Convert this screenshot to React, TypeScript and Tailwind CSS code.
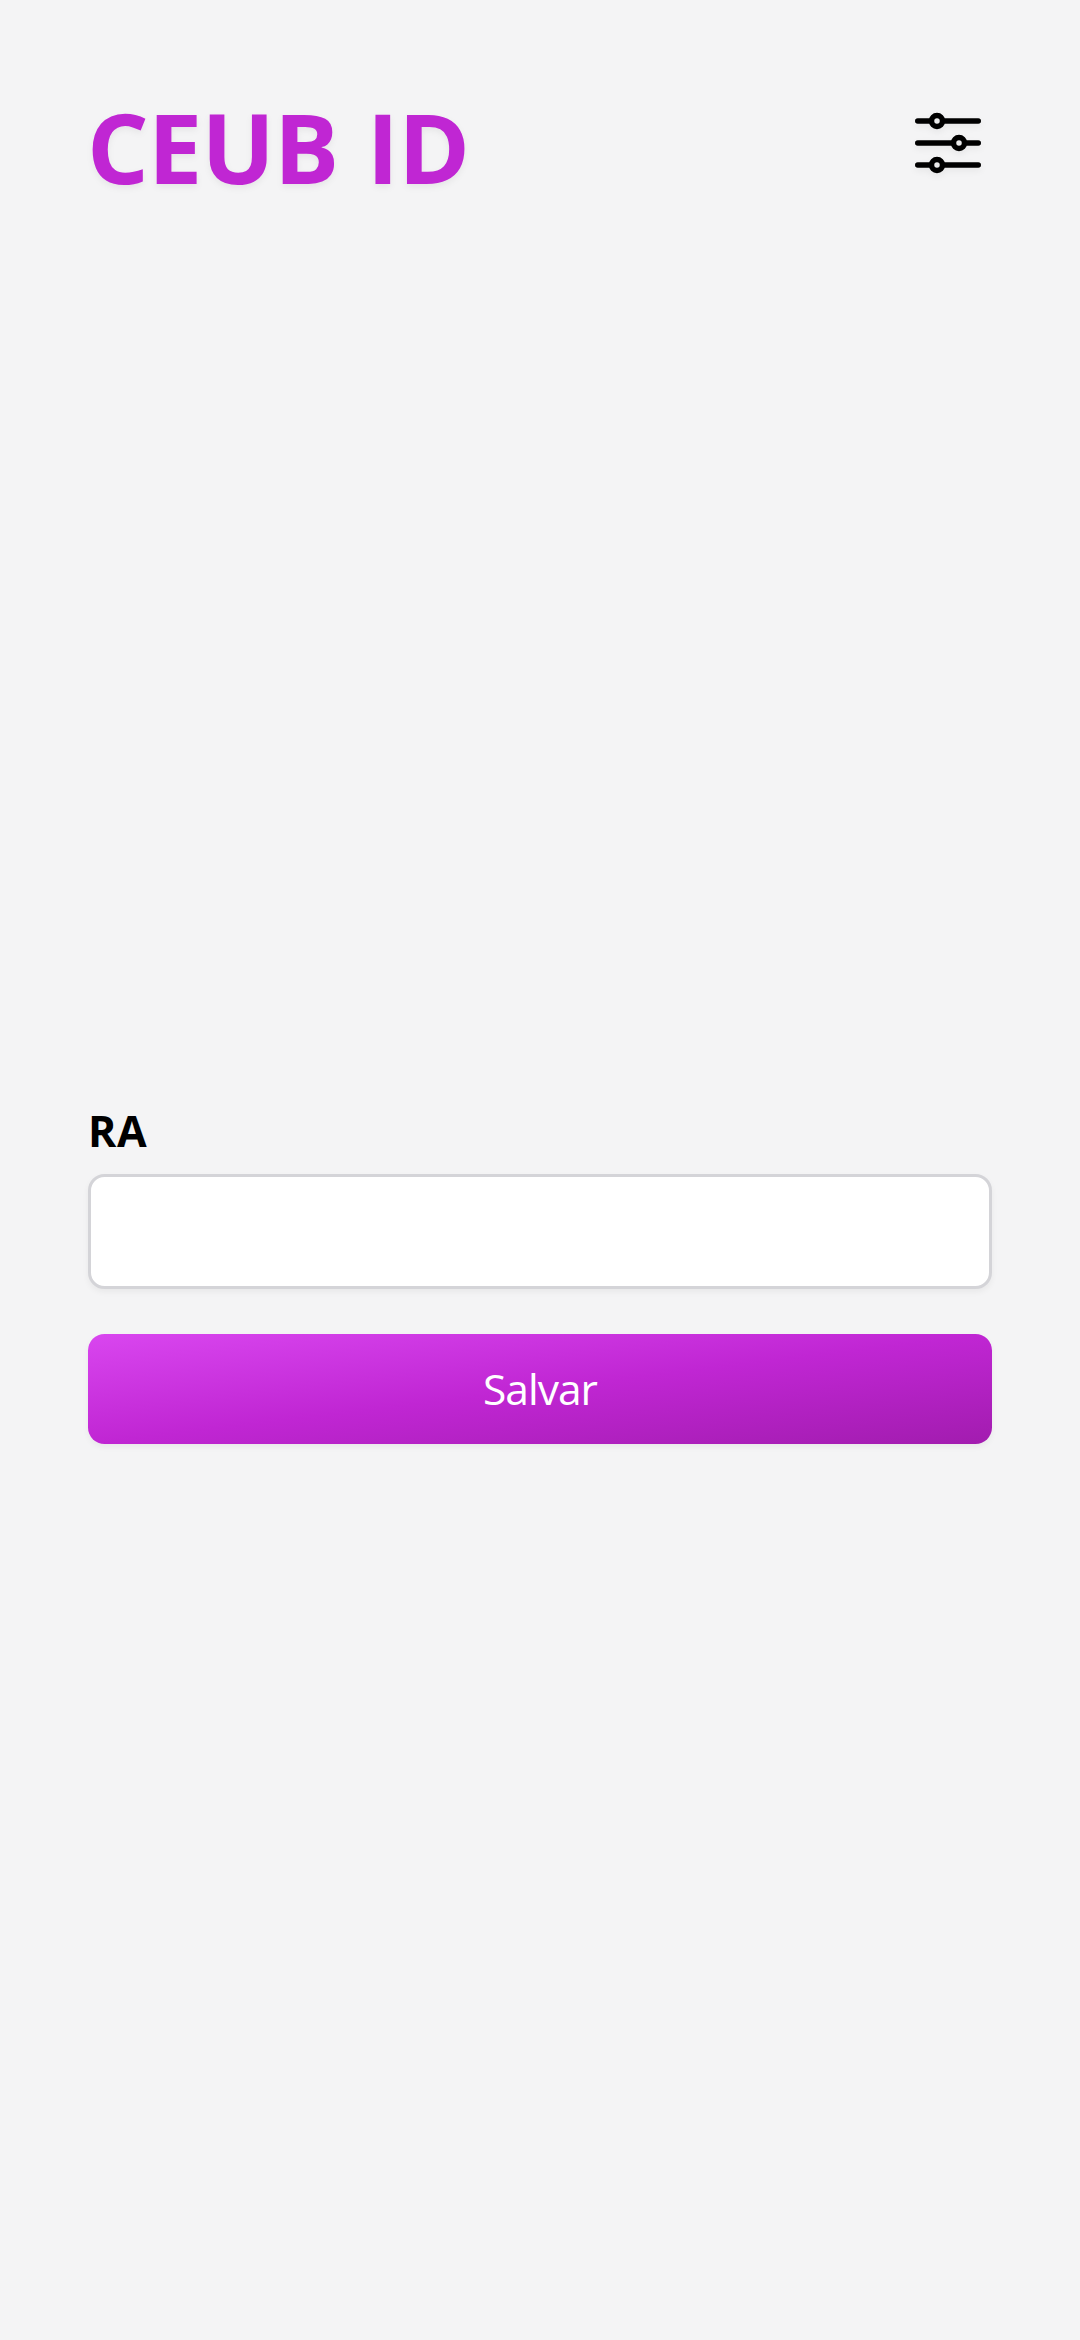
function AdjustmentsIcon() {
  return (
    <svg
      viewBox="0 0 24 24"
      fill="none"
      stroke="currentColor"
      strokeWidth={1.5}
      strokeLinecap="round"
      strokeLinejoin="round"
      className="size-[88px] drop-shadow-[0_3px_3px_rgba(0,0,0,0.06)]"
    >
      <path d="M10.5 6h9.75M10.5 6a1.5 1.5 0 1 1-3 0m3 0a1.5 1.5 0 1 0-3 0M3.75 6H7.5m3 12h9.75m-9.75 0a1.5 1.5 0 0 1-3 0m3 0a1.5 1.5 0 0 0-3 0m-3.75 0H7.5m9-6h3.75m-3.75 0a1.5 1.5 0 0 1-3 0m3 0a1.5 1.5 0 0 0-3 0m-9.75 0h9.75" />
    </svg>
  );
}

export default function App() {
  return (
    <div className="flex h-[2340px] w-[1080px] flex-col overflow-hidden bg-[#f4f4f5] px-[88px] font-['Open_Sans','Noto_Sans',sans-serif] text-black">
      <header className="flex h-[198px] items-start justify-between pt-[99px]">
        <h1 className="-mt-[3px] -ml-px text-[97px] leading-[100px] font-bold tracking-[-0.8px] text-[#c026d3] [word-spacing:4px] drop-shadow-[0_3px_3px_rgba(0,0,0,0.06)]">
          CEUB ID
        </h1>
        <button type="button" aria-label="Ajustes">
          <AdjustmentsIcon />
        </button>
      </header>
      <form className="mt-[900px] flex flex-col">
        <label htmlFor="ra" className="text-[43px] leading-[66px] font-bold tracking-[0.5px]">
          RA
        </label>
        <input
          id="ra"
          className="mt-[10px] h-[115px] rounded-[16.5px] border-[3px] border-[#d4d4d8] bg-white px-6 text-[43px] shadow-[0_3px_6px_rgba(0,0,0,0.05)] outline-none"
        />
        <button
          type="button"
          className="mt-[44.5px] h-[110px] rounded-[16.5px] bg-linear-to-br/srgb from-[#d946ef] via-[#c026d3] to-[#a21caf] pt-px text-[42.5px] leading-[66px] tracking-[-1px] text-white shadow-[0_3px_6px_rgba(0,0,0,0.05)]"
        >
          Salvar
        </button>
      </form>
    </div>
  );
}
